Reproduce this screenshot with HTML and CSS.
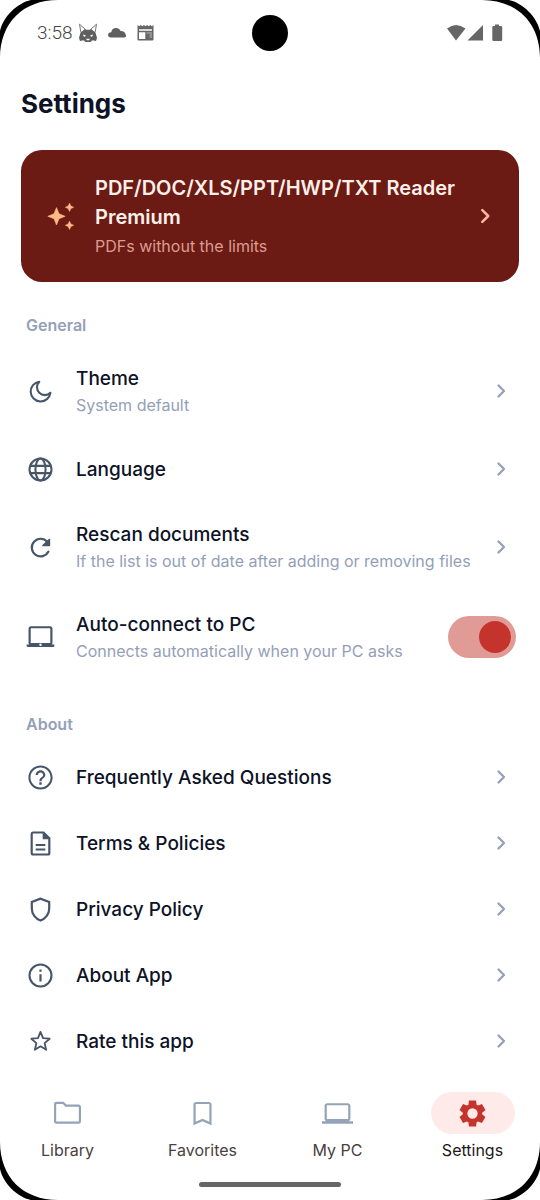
FILE: index.html
```html
<!DOCTYPE html>
<html lang="en">
<head>
<meta charset="utf-8">
<meta name="viewport" content="width=device-width, initial-scale=1">
<title>Settings</title>
<link rel="stylesheet" href="styles.css">
</head>
<body>
<svg class="sprite" aria-hidden="true">
  <symbol id="chevron" viewBox="0 0 24 24"><path d="M9.500 6.500 15 12l-5.500 5.500" fill="none" stroke="currentColor" stroke-width="2.300" stroke-linecap="round" stroke-linejoin="round"/></symbol>
  <symbol id="corner" viewBox="0 0 58 58"><path d="M0 0H58C23 0 0 23 0 58Z" fill="#000"/><path d="M0 0H31C17 3 3 17 0 31Z" fill="#fff"/></symbol>
  <symbol id="laptop" viewBox="0 0 24 24"><path fill="currentColor" d="M20 18c1.100 0 1.990-.9 1.990-2L22 6c0-1.100-.9-2-2-2H4c-1.100 0-2 .9-2 2v10c0 1.100.9 2 2 2H0v2h24v-2h-4zM3.700 5.700h16.600v10.600H3.700z"/></symbol>
</svg>
<div class="screen">
  <header class="status">
    <div class="status-group">
      <span class="clock">3:58</span>
      <svg class="status-icon fox" viewBox="0 0 20 20"><path fill="none" stroke="#777" d="M1.500 1.200 7.500 6.500M1.500 1.200 2.800 9M18.500 1.200l-6 5.300M18.500 1.200 17.200 9"/><path fill="#5f5f5f" d="M7 6l1.500.8h3L13 6l4.500 3.500L19 15l-1 3-3.500-.8L12.500 19h-5l-2-1.800L2 18l-1-3 1.500-5.500z"/><path fill="#fff" d="M5 11.500l3 1-1.200 1.200-1.300-.5zM15 11.500l-3 1 1.200 1.200 1.300-.5zM8.300 15.800h3.400l-.4 1.500H8.700z"/></svg>
      <svg class="status-icon" viewBox="0 0 20 20"><path fill="#5f5f5f" d="M3.500 14.500Q1 14.300 1 12q0-2.400 3.200-2.700Q5 5 9 5q3.200 0 4.600 3 4.200-.2 5.300 4 .6 2.500-1.900 2.500z"/></svg>
      <svg class="status-icon" viewBox="0 0 20 20"><path fill="#666" d="M1.500 2l1.600 1.200L4.700 2l1.600 1.200L7.900 2l1.600 1.200L11.100 2l1.600 1.200L14.300 2l1.600 1.200L17.500 2v14.500q0 1-1 1h-14q-1 0-1-1z"/><path fill="#fff" d="M3 6.200h13v1.500H3zM3 9.300h6.300V16H3z"/><path d="M10.500 10H16M13.500 12H16M13.500 14H16" stroke="#bbb"/></svg>
    </div>
    <span class="camera"></span>
    <div class="status-group">
      <svg class="status-icon" viewBox="0 0 20 20"><path fill="#666" d="M9 17.500 0 5.500q9-7 18.500 0z"/></svg>
      <svg class="status-icon" viewBox="0 0 20 20"><path fill="#666" d="M16 2v15.500H.5z"/></svg>
      <svg class="status-icon" viewBox="0 0 20 20"><path fill="#666" d="M8 1.500h4V3h2q1.200 0 1.200 1.200v12.500q0 1.300-1.200 1.300H6.500q-1.200 0-1.200-1.300V4.200Q5.300 3 6.500 3H8z"/></svg>
    </div>
  </header>
  <main class="content">
    <h1 class="title">Settings</h1>
    <button class="premium" type="button">
      <svg class="sparkle" viewBox="0 0 30 30"><path fill="#ffba85" stroke="#ffba85" stroke-width=".6" stroke-linejoin="round" d="M9.500 6.600l2.500 6.200 6.200 2.500-6.200 2.500-2.500 6.200-2.500-6.200-6.200-2.500 6.200-2.500zM22.500 2.200l1.300 2.800 2.800 1.300-2.800 1.300-1.300 2.800-1.300-2.800-2.800-1.300 2.800-1.300zM22.500 20.200l1.300 2.800 2.800 1.300-2.800 1.300-1.300 2.800-1.300-2.800-2.800-1.300 2.800-1.300z"/></svg>
      <span class="premium-text"><span class="premium-title">PDF/DOC/XLS/PPT/HWP/TXT Reader Premium</span><span class="premium-sub">PDFs without the limits</span></span>
      <svg class="premium-chevron"><use href="#chevron"/></svg>
    </button>
    <h2 class="section">General</h2>
    <div class="list">
      <button class="row tall" type="button">
        <svg class="icon" viewBox="0 0 24 24"><path d="M11 3.900A8.200 8.200 0 1 0 20.200 13.100 6.200 6.200 0 0 1 11 3.900z" fill="none" stroke="currentColor" stroke-width="1.700" stroke-linejoin="round"/></svg>
        <span class="text"><span class="label">Theme</span><span class="sub">System default</span></span>
        <svg class="chevron"><use href="#chevron"/></svg>
      </button>
      <button class="row" type="button">
        <svg class="icon" viewBox="0 0 24 24"><g fill="none" stroke="currentColor" stroke-width="1.700"><circle cx="12" cy="12" r="9.100"/><ellipse cx="12" cy="12" rx="4.200" ry="9.100"/><path d="M3.500 9h17M3.500 15h17"/></g></svg>
        <span class="text"><span class="label">Language</span></span>
        <svg class="chevron"><use href="#chevron"/></svg>
      </button>
      <button class="row tall" type="button">
        <svg class="icon" viewBox="0 0 24 24"><path d="M18.600 15.400A7.300 7.300 0 1 1 17.600 7.200" fill="none" stroke="currentColor" stroke-width="1.800" stroke-linecap="round"/><path d="M19.500 5.200v5.200h-5.600z" fill="currentColor" stroke="currentColor" stroke-linejoin="round"/></svg>
        <span class="text"><span class="label">Rescan documents</span><span class="sub">If the list is out of date after adding or removing files</span></span>
        <svg class="chevron"><use href="#chevron"/></svg>
      </button>
      <label class="row tall">
        <svg class="icon" viewBox="0 0 24 24"><path d="M.5 17.800h23v1q0 1-1.200 1H1.700q-1.200 0-1.200-1z" fill="currentColor"/><rect x="3" y="3.500" width="18" height="14" rx="1.200" fill="none" stroke="currentColor" stroke-width="1.800"/><circle cx="12" cy="18" r="1" fill="#fff"/></svg>
        <span class="text"><span class="label">Auto-connect to PC</span><span class="sub">Connects automatically when your PC asks</span></span>
        <input class="switch" type="checkbox" role="switch" checked>
      </label>
    </div>
    <h2 class="section about">About</h2>
    <div class="list">
      <button class="row" type="button">
        <svg class="icon" viewBox="0 0 24 24"><path fill="currentColor" d="M11 18h2v-2h-2v2zm1-16C6.480 2 2 6.480 2 12s4.480 10 10 10 10-4.480 10-10S17.520 2 12 2zm0 18.300c-4.600 0-8.300-3.700-8.300-8.300S7.400 3.700 12 3.700s8.300 3.700 8.300 8.300-3.700 8.300-8.300 8.300zM12 6c-2.210 0-4 1.790-4 4h1.800c0-1.200 1-2.200 2.200-2.200s2.200 1 2.200 2.200c0 2-3.100 1.750-3.100 5h1.800c0-2.250 3.100-2.500 3.100-5 0-2.210-1.790-4-4-4z"/></svg>
        <span class="text"><span class="label">Frequently Asked Questions</span></span>
        <svg class="chevron"><use href="#chevron"/></svg>
      </button>
      <button class="row" type="button">
        <svg class="icon" viewBox="0 0 24 24"><path d="M5.700 2.900h8.800l4.800 4.800v12.200q0 1.200-1.200 1.200H5.900q-1.200 0-1.200-1.200V4.100q0-1.200 1-1.200z" fill="none" stroke="currentColor" stroke-width="1.800"/><path d="M13.800 2.500v6h6z" fill="currentColor"/><path d="M8 13.200h8M8 16.900h8" stroke="currentColor" stroke-width="1.700"/></svg>
        <span class="text"><span class="label">Terms &amp; Policies</span></span>
        <svg class="chevron"><use href="#chevron"/></svg>
      </button>
      <button class="row" type="button">
        <svg class="icon" viewBox="0 0 24 24"><path d="M12 3 4.800 5.700v5.500c0 4.500 3 8.500 7.200 9.900 4.200-1.400 7.200-5.400 7.200-9.900V5.700z" fill="none" stroke="currentColor" stroke-width="1.800"/></svg>
        <span class="text"><span class="label">Privacy Policy</span></span>
        <svg class="chevron"><use href="#chevron"/></svg>
      </button>
      <button class="row" type="button">
        <svg class="icon" viewBox="0 0 24 24"><circle cx="12" cy="12" r="9.100" fill="none" stroke="currentColor" stroke-width="1.700"/><path d="M11.100 11h1.800v6h-1.800zM11.100 7h1.800v1.900h-1.800z" fill="currentColor"/></svg>
        <span class="text"><span class="label">About App</span></span>
        <svg class="chevron"><use href="#chevron"/></svg>
      </button>
      <button class="row" type="button">
        <svg class="icon" viewBox="0 0 24 24"><path d="m12 4 2.100 5.200 5.500.5-4.200 3.600 1.300 5.600-4.700-2.900-4.700 2.900 1.300-5.600-4.200-3.600 5.500-.5z" fill="none" stroke="currentColor" stroke-width="1.500" stroke-linejoin="round"/></svg>
        <span class="text"><span class="label">Rate this app</span></span>
        <svg class="chevron"><use href="#chevron"/></svg>
      </button>
    </div>
  </main>
  <nav class="tabs">
    <a class="tab" href="#library"><span class="pill"><svg class="tab-icon" viewBox="0 0 24 24"><path d="M3.400 3.800h5.400l2 2.100h9.800q1 0 1 1v11.200q0 1-1 1H3.400q-1 0-1-1V4.800q0-1 1-1z" fill="none" stroke="currentColor" stroke-width="1.700" stroke-linejoin="round"/></svg></span>Library</a>
    <a class="tab" href="#favorites"><span class="pill"><svg class="tab-icon" viewBox="0 0 24 24"><path fill="currentColor" d="M17 3H7c-1.100 0-2 .9-2 2v16l7-3 7 3V5c0-1.100-.9-2-2-2zm.3 15.400L12 16.100l-5.300 2.300V4.700h10.600z"/></svg></span>Favorites</a>
    <a class="tab" href="#my-pc"><span class="pill"><svg class="tab-icon"><use href="#laptop"/></svg></span>My PC</a>
    <a class="tab active" href="#settings" aria-current="page"><span class="pill"><svg class="tab-icon" viewBox="0 0 24 24"><path fill="currentColor" fill-rule="evenodd" d="M9.250 22l-.4-3.200q-.325-.125-.613-.3t-.562-.375L4.700 19.375l-2.750-4.750 2.575-1.950q-.025-.175-.025-.338v-.675q0-.162.025-.337L1.950 9.375l2.750-4.750 2.975 1.250q.275-.2.575-.375t.6-.3l.4-3.200h5.500l.4 3.200q.325.125.613.300t.562.375l2.975-1.250 2.750 4.750-2.575 1.950q.025.175.025.337v.675q0 .163-.05.338l2.575 1.950-2.750 4.750-2.950-1.250q-.275.2-.575.375t-.6.3l-.4 3.200zM12 8a4 4 0 1 0 0 8 4 4 0 0 0 0-8z"/></svg></span>Settings</a>
  </nav>
  <div class="gesture"></div>
  <svg class="corner tl"><use href="#corner"/></svg>
  <svg class="corner tr"><use href="#corner"/></svg>
  <svg class="corner bl"><use href="#corner"/></svg>
  <svg class="corner br"><use href="#corner"/></svg>
</div>
</body>
</html>
```
FILE: styles.css
```css
* { box-sizing: border-box; }
body { margin: 0; background: #fff; font-family: Inter, "Liberation Sans", sans-serif; color: #0d1226; }
button { border: 0; background: none; font: inherit; color: inherit; text-align: left; cursor: pointer; }
svg { display: block; flex: none; }
.sprite { display: none; }
.screen { position: relative; display: flex; flex-direction: column; height: 100vh; overflow: hidden; background: #fff; }

.status { position: relative; display: flex; justify-content: space-between; align-items: center; flex: none; height: 66px; padding: 0 33px 0 37px; }
.status-group { display: flex; align-items: center; }
.status-group:first-child { gap: 9px; }
.clock { font: 300 19px/24px Roboto, sans-serif; color: #444; }
.status-icon { width: 20px; height: 20px; }
.fox { margin-left: -4px; }
.camera { position: absolute; left: 50%; top: 15px; width: 36px; height: 36px; margin-left: -18px; border-radius: 50%; background: #000; }

.content { flex: 1; min-height: 0; overflow: hidden; padding: 0 21px; }
.title { margin: 20px 0 28px; font-size: 26px; line-height: 36px; font-weight: 700; }
.premium { display: flex; align-items: center; width: 100%; padding: 22px 21px 22px 26px; border-radius: 21px; background: #6b1a14; }
.sparkle { width: 30px; height: 30px; }
.premium-text { display: flex; flex-direction: column; flex: 1; min-width: 0; padding: 2px 4px 0 18px; }
.premium-title { font-size: 20px; line-height: 29px; font-weight: 600; color: #fff0e9; }
.premium-sub { font-size: 16px; line-height: 28px; color: #dc9c91; }
.premium-chevron { width: 26px; height: 26px; color: #ffb7a5; }

.section { margin: 32px 5px 10px; font-size: 16px; line-height: 22px; font-weight: 600; color: #94a0b8; }
.about { margin-top: 31px; margin-bottom: 9px; }
.row { display: flex; align-items: center; width: 100%; min-height: 66px; padding: 0 6px 0 5px; }
.tall { min-height: 90px; }
.icon { width: 29px; height: 29px; color: #475569; }
.text { display: flex; flex-direction: column; flex: 1; min-width: 0; padding-left: 21px; }
.label { font-size: 19px; line-height: 27px; font-weight: 500; }
.sub { font-size: 16px; line-height: 26px; color: #94a0b8; white-space: nowrap; }
.chevron { width: 24px; height: 24px; color: #94a0b8; }
label.row { padding-right: 3px; }
.switch { appearance: none; display: flex; justify-content: flex-end; align-items: center; width: 68px; height: 42px; margin: 0; padding: 5px; border-radius: 21px; background: #e19b97; }
.switch::before { content: ""; width: 32px; height: 32px; border-radius: 50%; background: #c4342d; }
.switch:not(:checked) { justify-content: flex-start; background: #cbd5e1; }

.tabs { display: flex; flex: none; padding: 20px 0; background: #fff; }
.tab { display: flex; flex-direction: column; align-items: center; flex: 1; gap: 4px; font-size: 16px; line-height: 24px; color: #4a4041; text-decoration: none; }
.pill { display: grid; place-items: center; width: 84px; height: 42px; border-radius: 21px; color: #94a3b8; }
.tab-icon { width: 31px; height: 31px; }
.active { color: #1d1819; }
.active .pill { background: #feebe9; color: #c4342d; }
.gesture { flex: none; align-self: center; width: 142px; height: 5px; margin-bottom: 13px; border-radius: 3px; background: #666; }

.corner { position: absolute; width: 58px; height: 58px; pointer-events: none; }
.tl { left: 0; top: 0; }
.tr { right: 0; top: 0; transform: scaleX(-1); }
.bl { left: 0; bottom: 0; transform: scaleY(-1); }
.br { right: 0; bottom: 0; transform: scale(-1); }
```
